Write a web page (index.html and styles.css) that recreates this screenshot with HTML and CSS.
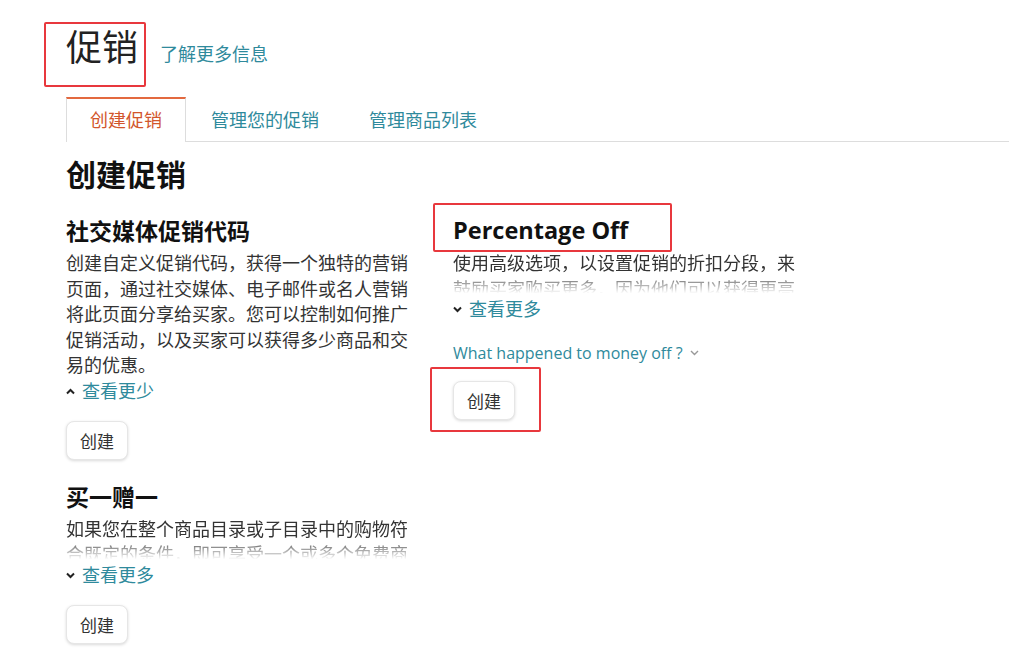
FILE: index.html
```html
<!DOCTYPE html>
<html lang="zh-CN">

<head>
  <meta charset='utf-8'>
  <title>促销</title>
  <meta name='viewport' content='width=device-width, initial-scale=1'>
  <link rel="stylesheet" href="styles.css">
</head>

<body>
  <div id="page">
    <div class="head">
      <h1 class="pageTitle">促销</h1>
      <a class="link" href="#">了解更多信息</a>
    </div>

    <div class="tabs">
      <div class="tab active">创建促销</div>
      <div class="tab">管理您的促销</div>
      <div class="tab">管理商品列表</div>
    </div>

    <h2 class="sectionTitle">创建促销</h2>

    <div class="cols">
      <div class="col">
        <div class="promo">
          <h3 class="promoTitle">社交媒体促销代码</h3>
          <p class="desc">创建自定义促销代码，获得一个独特的营销页面，通过社交媒体、电子邮件或名人营销将此页面分享给买家。您可以控制如何推广促销活动，以及买家可以获得多少商品和交易的优惠。</p>
          <a class="toggle" href="#">
            <svg width="9" height="7" viewBox="0 0 9 7"><polyline points="1,5.5 4.5,2 8,5.5" fill="none" stroke="#222" stroke-width="2"/></svg>
            <span>查看更少</span>
          </a>
          <button class="btn">创建</button>
        </div>

        <div class="promo">
          <h3 class="promoTitle">买一赠一</h3>
          <p class="desc short">如果您在整个商品目录或子目录中的购物符合既定的条件，即可享受一个或多个免费商品的优惠。</p>
          <a class="toggle" href="#">
            <svg width="9" height="7" viewBox="0 0 9 7"><polyline points="1,1.5 4.5,5 8,1.5" fill="none" stroke="#222" stroke-width="2"/></svg>
            <span>查看更多</span>
          </a>
          <button class="btn">创建</button>
        </div>
      </div>

      <div class="col">
        <div class="promo">
          <h3 class="promoTitle latin marked markTitle">Percentage Off</h3>
          <p class="desc short">使用高级选项，以设置促销的折扣分段，来鼓励买家购买更多，因为他们可以获得更高的折扣。</p>
          <a class="toggle" href="#">
            <svg width="9" height="7" viewBox="0 0 9 7"><polyline points="1,1.5 4.5,5 8,1.5" fill="none" stroke="#222" stroke-width="2"/></svg>
            <span>查看更多</span>
          </a>
          <a class="question" href="#">What happened to money off ?
            <svg width="9" height="6" viewBox="0 0 9 6"><polyline points="1,1 4.5,4.5 8,1" fill="none" stroke="#999" stroke-width="1.4"/></svg>
          </a>
          <div class="marked markBtn">
            <button class="btn">创建</button>
          </div>
        </div>
      </div>
    </div>
  </div>
</body>

</html>
```

FILE: styles.css
```css
* {
  box-sizing: border-box;
  font-family: "Open Sans", "Noto Sans CJK SC", sans-serif;
}

body {
  margin: 0;
  background-color: #fff;
  color: #333;
}

a {
  text-decoration: none;
}

#page {
  padding-left: 66px;
}

.head {
  display: flex;
  align-items: baseline;
  gap: 14px;
  padding-top: 22px;
  margin-left: -22px;
}

.pageTitle {
  margin: 0;
  width: 102px;
  height: 65px;
  padding: 0 0 0 20px;
  border: 2px solid #e8383d;
  border-radius: 2px;
  font-size: 36px;
  font-weight: 400;
  line-height: 48px;
  color: #222;
}

.link {
  font-size: 18px;
  color: #2f8a9c;
}

.tabs {
  display: flex;
  margin-top: 10px;
  border-bottom: 1px solid #ddd;
  height: 45px;
}

.tab {
  padding: 0 24px;
  font-size: 18px;
  line-height: 42px;
  color: #2f8a9c;
  border-top: 2px solid transparent;
  border-left: 1px solid transparent;
  border-right: 1px solid transparent;
}

.tab.active {
  color: #d2562c;
  border-top-color: #e3693f;
  border-left-color: #ddd;
  border-right-color: #ddd;
  background-color: #fff;
  margin-bottom: -1px;
  height: 45px;
  padding: 0 23px;
}

.sectionTitle {
  margin: 13px 0 0;
  font-size: 30px;
  line-height: 40px;
  font-weight: 700;
  color: #111;
}

.cols {
  display: grid;
  grid-template-columns: 345px 345px;
  column-gap: 42px;
  margin-top: 20px;
}

.promo {
  display: flex;
  flex-direction: column;
  align-items: flex-start;
  margin-bottom: 21px;
}

.promoTitle {
  margin: 0 0 4px;
  font-size: 23px;
  line-height: 32px;
  font-weight: 700;
  color: #111;
}

.promoTitle.latin {
  font-size: 23.5px;
  line-height: 31px;
  margin-bottom: 5px;
}

.desc {
  margin: 0;
  font-size: 18px;
  line-height: 25.5px;
  color: #333;
}

.desc.short {
  height: 46px;
  overflow: hidden;
  -webkit-mask-image: linear-gradient(to bottom, #000 45%, transparent 92%);
  mask-image: linear-gradient(to bottom, #000 45%, transparent 92%);
}

.toggle {
  display: flex;
  align-items: center;
  gap: 7px;
  font-size: 18px;
  line-height: 25px;
  color: #2f8a9c;
}

.question {
  display: flex;
  align-items: center;
  gap: 7px;
  margin-top: 19px;
  font-size: 16px;
  line-height: 24px;
  color: #2f8a9c;
}

.btn {
  margin-top: 17px;
  height: 39px;
  padding: 0 13px;
  font-size: 17px;
  color: #333;
  background-color: #fff;
  border: 1px solid #e6e6e6;
  border-radius: 8px;
  box-shadow: 0 1px 3px rgba(0, 0, 0, 0.15);
}

.marked {
  position: relative;
}

.marked::after {
  content: '';
  position: absolute;
  border: 2px solid #e8383d;
  border-radius: 2px;
}

.markTitle::after {
  left: -20px;
  top: -12px;
  width: 235px;
  height: 45px;
}

.markBtn {
  margin-top: 16px;
}

.markBtn .btn {
  margin-top: 0;
}

.markBtn::after {
  left: -23px;
  top: -14px;
  width: 107px;
  height: 61px;
}
```
